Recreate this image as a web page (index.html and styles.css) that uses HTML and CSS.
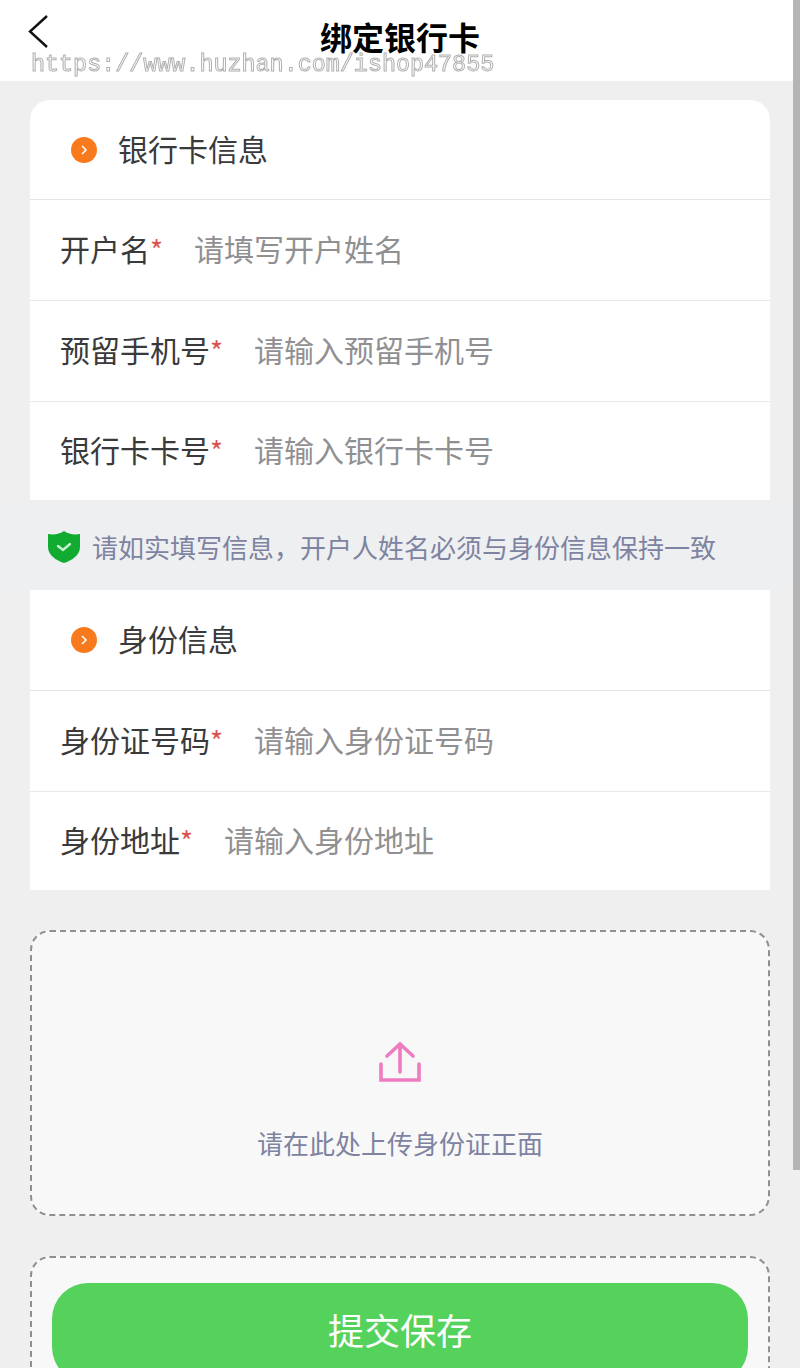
FILE: index.html
```html
<!DOCTYPE html>
<html lang="zh-CN">
<head>
<meta charset="utf-8">
<title>绑定银行卡</title>
<link rel="stylesheet" href="styles.css">
</head>
<body>
<div class="page">
	<header class="topbar">
		<svg class="back" width="24" height="36" viewBox="0 0 24 36"><path d="M21 2 L4 17.5 L21 33" fill="none" stroke="#111" stroke-width="2.400"/></svg>
		<h1>绑定银行卡</h1>
		<div class="watermark">https://www.huzhan.com/ishop47855</div>
	</header>

	<section class="card card-top">
		<div class="sec-head">
			<svg class="dot" width="26" height="26" viewBox="0 0 26 26"><circle cx="13" cy="13" r="13" fill="#f97a1c"/><path d="M11 9 L15 13 L11 17" fill="none" stroke="#fff" stroke-width="1.600"/></svg>
			<span>银行卡信息</span>
		</div>
		<div class="row"><label>开户名<i>*</i></label><span class="ph">请填写开户姓名</span></div>
		<div class="row"><label>预留手机号<i>*</i></label><span class="ph">请输入预留手机号</span></div>
		<div class="row"><label>银行卡卡号<i>*</i></label><span class="ph">请输入银行卡卡号</span></div>
	</section>

	<div class="notice">
		<svg width="32" height="32" viewBox="0 0 32 32"><path d="M16 0 C20 3 26 4 32 3 V16 C32 24 24 29.500 16 32 C8 29.500 0 24 0 16 V3 C6 4 12 3 16 0 Z" fill="#12ab32"/><path d="M10 15 L15 19 L22 13" fill="none" stroke="#c8f0d0" stroke-width="2.400" stroke-linecap="round"/></svg>
		<span>请如实填写信息，开户人姓名必须与身份信息保持一致</span>
	</div>

	<section class="card card-id">
		<div class="sec-head">
			<svg class="dot" width="26" height="26" viewBox="0 0 26 26"><circle cx="13" cy="13" r="13" fill="#f97a1c"/><path d="M11 9 L15 13 L11 17" fill="none" stroke="#fff" stroke-width="1.600"/></svg>
			<span>身份信息</span>
		</div>
		<div class="row"><label>身份证号码<i>*</i></label><span class="ph">请输入身份证号码</span></div>
		<div class="row"><label>身份地址<i>*</i></label><span class="ph">请输入身份地址</span></div>
	</section>

	<div class="upload">
		<svg width="42" height="42" viewBox="0 0 42 42"><path d="M21 31 V4 M8 15 L21 3 L34 15 M2 23 V39 H40 V23" fill="none" stroke="#ee7cc0" stroke-width="3.600" stroke-linecap="round"/></svg>
		<p>请在此处上传身份证正面</p>
	</div>

	<div class="upload upload-last">
		<button class="save">提交保存</button>
	</div>

	<div class="scroll-thumb"></div>
</div>
</body>
</html>
```

FILE: styles.css
```css
html, body { margin: 0; padding: 0; }
body {
	background: #efefef;
	font-family: "Noto Sans CJK SC", "Noto Sans", sans-serif;
	color: #3a3a3a;
}
.page {
	position: relative;
	height: 1368px;
	overflow: hidden;
}

.topbar {
	position: relative;
	height: 81px;
	background: #fff;
}
.topbar h1 {
	margin: 0;
	padding-top: 13px;
	font-size: 32px;
	line-height: 46px;
	font-weight: 700;
	color: #000;
	text-align: center;
}
.back {
	position: absolute;
	left: 26px;
	top: 14px;
}
.watermark {
	position: absolute;
	left: 31px;
	top: 47px;
	font-family: "Liberation Mono", monospace;
	font-size: 23.400px;
	line-height: 36px;
	white-space: nowrap;
	color: rgba(255,255,255,.75);
	-webkit-text-stroke: 1px #b0b0b0;
	will-change: opacity;
}

.card {
	margin: 0 30px;
	background: #fff;
}
.card-top {
	margin-top: 19px;
	border-radius: 20px 20px 0 0;
}
.sec-head {
	display: flex;
	align-items: center;
	height: 100px;
	padding-left: 41px;
	border-bottom: 1px solid #e4e4e4;
	box-sizing: border-box;
	font-size: 30px;
}
.card-id .sec-head { height: 101px; }
.sec-head .dot { margin-right: 21px; }
.sec-head span { margin-bottom: 4px; }
.row {
	display: flex;
	align-items: center;
	height: 101px;
	padding: 0 0 4px 30px;
	border-bottom: 1px solid #e9e9e9;
	box-sizing: border-box;
	font-size: 30px;
}
.row:last-child { border-bottom: 0; height: 98px; }
.row label { white-space: nowrap; }
.row i {
	color: #d9534f;
	font-style: normal;
	font-size: 28px;
}
.ph { margin-left: 31px; color: #909092; }

.notice {
	display: flex;
	align-items: center;
	height: 90px;
	box-sizing: border-box;
	padding: 3px 0 0 48px;
	background: #eeeff0;
	font-size: 26px;
	color: #7d83a0;
}
.notice svg { margin-right: 12px; }

.upload {
	margin: 40px 30px 0;
	height: 286px;
	box-sizing: border-box;
	background: #f8f8f8;
	border: 2px dashed #8f8f8f;
	border-radius: 20px;
	display: flex;
	flex-direction: column;
	align-items: center;
	padding-top: 109px;
}
.upload p {
	margin: 41px 0 0;
	font-size: 26px;
	line-height: 38px;
	color: #7d83a0;
}
.upload-last {
	padding: 25px 20px 0;
}
.save {
	width: 100%;
	height: 100px;
	flex: none;
	border: 0;
	border-radius: 36px;
	padding: 0 0 8px;
	background: #54d25c;
	color: #fff;
	font-family: inherit;
	font-size: 36px;
}

.scroll-thumb {
	position: absolute;
	right: 0;
	top: 0;
	width: 7px;
	height: 1170px;
	background: #b5b5b5;
}
```
